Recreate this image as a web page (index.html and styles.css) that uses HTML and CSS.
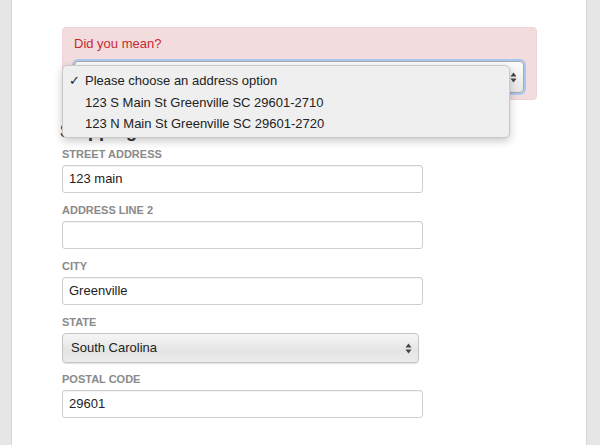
FILE: index.html
```html
<!DOCTYPE html>
<html>
<head>
<meta charset="utf-8">
<link rel="stylesheet" href="styles.css">
</head>
<body>
<div class="page">
  <div class="alert">
    <div class="alert-title">Did you mean?</div>
    <div class="suggest-select">
      <span class="arrows"><svg width="7" height="11" viewBox="0 0 7 11"><path d="M3.5 0.5L6.5 4.5H0.5Z" fill="#444"/><path d="M3.5 10.5L6.5 6.5H0.5Z" fill="#444"/></svg></span>
    </div>
    <ul class="menu">
      <li class="menu-item checked"><span class="check">✓</span>Please choose an address option</li>
      <li class="menu-item">123 S Main St Greenville SC 29601-2710</li>
      <li class="menu-item">123 N Main St Greenville SC 29601-2720</li>
    </ul>
  </div>
  <h2 class="heading">Shipping Address</h2>
  <div class="field">
    <label class="label">Street Address</label>
    <div class="input">123 main</div>
  </div>
  <div class="field">
    <label class="label">Address Line 2</label>
    <div class="input"></div>
  </div>
  <div class="field">
    <label class="label">City</label>
    <div class="input">Greenville</div>
  </div>
  <div class="field field-select">
    <label class="label">State</label>
    <div class="select">South Carolina
      <span class="arrows"><svg width="7" height="11" viewBox="0 0 7 11"><path d="M3.5 0.5L6.5 4.5H0.5Z" fill="#444"/><path d="M3.5 10.5L6.5 6.5H0.5Z" fill="#444"/></svg></span>
    </div>
  </div>
  <div class="field">
    <label class="label">Postal Code</label>
    <div class="input">29601</div>
  </div>
</div>
</body>
</html>
```

FILE: styles.css
```css
html, body {
  margin: 0;
  padding: 0;
  background: #e6e6e6;
  font-family: "Liberation Sans", Arial, sans-serif;
  height: 445px;
  overflow: hidden;
}
.page {
  margin-left: 11px;
  width: 576px;
  height: 445px;
  background: #fff;
  border-left: 1px solid #d6d6d6;
  border-right: 1px solid #d6d6d6;
  padding: 27px 0 0 50px;
  box-sizing: border-box;
}
.alert {
  position: relative;
  z-index: 2;
  width: 475px;
  box-sizing: border-box;
  background: #f2dcdd;
  border: 1px solid #efd3d5;
  border-radius: 4px;
  padding: 7px 12px 6px 11px;
}
.alert-title {
  font-size: 13px;
  line-height: 18px;
  color: #c62a32;
  margin-bottom: 8px;
}
.suggest-select {
  position: relative;
  height: 30px;
  border: 1px solid #a9a9a9;
  border-radius: 4px;
  background: linear-gradient(#fdfdfd, #e6e6e6);
  box-shadow: 0 0 0 2px #a8c8f2;
}
.suggest-select .arrows {
  position: absolute;
  right: 6px;
  top: 10px;
  line-height: 0;
}
.menu {
  position: absolute;
  left: -1px;
  top: 37px;
  width: 448px;
  margin: 0;
  padding: 4px 0 2px;
  list-style: none;
  background: #efefef;
  border: 1px solid #c9c9c9;
  border-radius: 5px;
  box-shadow: 0 3px 8px rgba(0, 0, 0, 0.22);
  box-sizing: border-box;
}
.menu-item {
  position: relative;
  font-size: 13px;
  line-height: 21.5px;
  color: #222;
  padding-left: 22px;
}
.check {
  position: absolute;
  left: 6px;
  top: 0;
  font-family: "DejaVu Sans", sans-serif;
  font-size: 13px;
  font-weight: bold;
}
.heading {
  position: relative;
  z-index: 1;
  margin: 20px 0 5px -2px;
  font-size: 18px;
  line-height: 22px;
  font-weight: bold;
  color: #333;
}
.field {
  margin-bottom: 10px;
}
.field-select {
  margin-bottom: 9px;
}
.label {
  display: block;
  font-size: 11px;
  line-height: 14px;
  font-weight: bold;
  text-transform: uppercase;
  color: #8a8a8a;
  margin-bottom: 4px;
}
.input {
  width: 361px;
  height: 28px;
  box-sizing: border-box;
  border: 1px solid #cfcfcf;
  border-radius: 3px;
  box-shadow: inset 0 1px 1px rgba(0, 0, 0, 0.06);
  font-size: 13px;
  line-height: 26px;
  color: #222;
  padding-left: 6px;
}
.select {
  position: relative;
  width: 357px;
  height: 30px;
  box-sizing: border-box;
  border: 1px solid #c4c4c4;
  border-radius: 4px;
  background: linear-gradient(#f6f6f6, #e4e4e4 60%, #ececec);
  box-shadow: 0 1px 1px rgba(0, 0, 0, 0.12);
  font-size: 13px;
  line-height: 28px;
  color: #222;
  padding-left: 8px;
}
.select .arrows {
  position: absolute;
  right: 6px;
  top: 9px;
  line-height: 0;
}
```
